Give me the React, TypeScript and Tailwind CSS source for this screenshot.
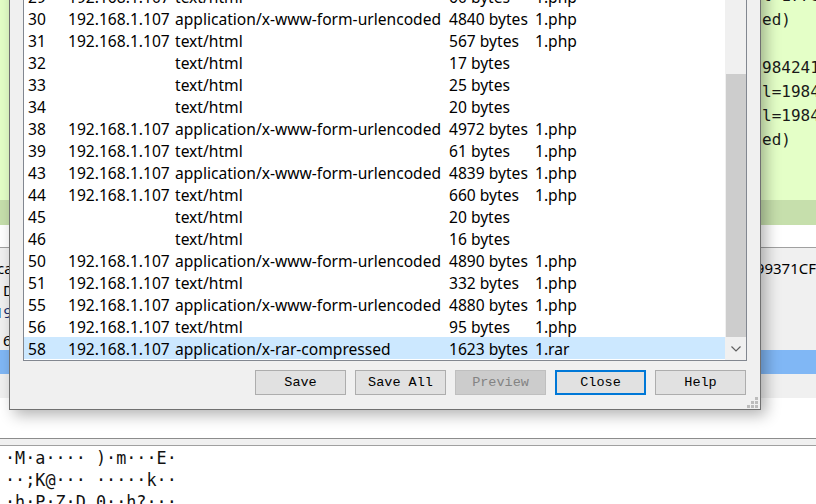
import React from "react";

type Row = { n: string; host: string; type: string; size: string; file: string; sel?: boolean };

const HOST = "192.168.1.107";
const FORM = "application/x-www-form-urlencoded";
const HTML = "text/html";

const rows: Row[] = [
  { n: "29", host: HOST, type: HTML, size: "60 bytes", file: "1.php" },
  { n: "30", host: HOST, type: FORM, size: "4840 bytes", file: "1.php" },
  { n: "31", host: HOST, type: HTML, size: "567 bytes", file: "1.php" },
  { n: "32", host: "", type: HTML, size: "17 bytes", file: "" },
  { n: "33", host: "", type: HTML, size: "25 bytes", file: "" },
  { n: "34", host: "", type: HTML, size: "20 bytes", file: "" },
  { n: "38", host: HOST, type: FORM, size: "4972 bytes", file: "1.php" },
  { n: "39", host: HOST, type: HTML, size: "61 bytes", file: "1.php" },
  { n: "43", host: HOST, type: FORM, size: "4839 bytes", file: "1.php" },
  { n: "44", host: HOST, type: HTML, size: "660 bytes", file: "1.php" },
  { n: "45", host: "", type: HTML, size: "20 bytes", file: "" },
  { n: "46", host: "", type: HTML, size: "16 bytes", file: "" },
  { n: "50", host: HOST, type: FORM, size: "4890 bytes", file: "1.php" },
  { n: "51", host: HOST, type: HTML, size: "332 bytes", file: "1.php" },
  { n: "55", host: HOST, type: FORM, size: "4880 bytes", file: "1.php" },
  { n: "56", host: HOST, type: HTML, size: "95 bytes", file: "1.php" },
  { n: "58", host: HOST, type: "application/x-rar-compressed", size: "1623 bytes", file: "1.rar", sel: true },
];

const greenLines = ["l=1776001", "ed)", "\u00a0", "98424170", "l=19842417", "l=19842417", "ed)"];
const hexLines = [
  "\u00b7M\u00b7a\u00b7\u00b7\u00b7\u00b7 )\u00b7m\u00b7\u00b7\u00b7E\u00b7",
  "\u00b7\u00b7;K@\u00b7\u00b7\u00b7 \u00b7\u00b7\u00b7\u00b7\u00b7k\u00b7\u00b7",
  "\u00b7h\u00b7P\u00b7Z\u00b7D 0\u00b7\u00b7h?\u00b7\u00b7\u00b7",
];

const sans = { fontFamily: '"Noto Sans", "Liberation Sans", sans-serif' };
const mono = { fontFamily: '"DejaVu Sans Mono", "Liberation Mono", monospace' };
const btnFont = { fontFamily: '"Liberation Mono", "DejaVu Sans Mono", monospace' };

function Btn({ label, kind }: { label: string; kind?: "default" | "disabled" }) {
  const cls =
    kind === "default"
      ? "border-2 border-[#0078d7] bg-[#e1e1e1] text-black"
      : kind === "disabled"
      ? "border border-[#bfbfbf] bg-[#cccccc] text-[#838383]"
      : "border border-[#adadad] bg-[#e1e1e1] text-black";
  return (
    <div className={`w-[91px] h-[25px] pt-[2px] flex items-center justify-center text-[13.5px] ${cls}`} style={btnFont}>
      {label}
    </div>
  );
}

export default function App() {
  return (
    <div className="relative w-[816px] h-[504px] overflow-hidden bg-white">
      {/* background main window */}
      <div className="flex flex-col w-full h-full">
        <div className="h-[200px] shrink-0 bg-[#e4ffc7] overflow-hidden">
          <div className="flex flex-col pl-[762px] -mt-[16px] text-[16px] leading-[24px] text-[#1a1a1a] whitespace-nowrap" style={mono}>
            {greenLines.map((l, i) => (
              <div key={i} className="h-[24px]">{l}</div>
            ))}
          </div>
        </div>
        <div className="h-[25px] shrink-0 bg-[#c6dfac]" />
        <div className="h-[22px] shrink-0 bg-white" />
        <div className="h-px shrink-0 bg-[#a0a0a0]" />
        <div className="h-[102px] shrink-0 bg-[#f0f0f0] pt-[9px] text-[15px] leading-[22px] text-black whitespace-nowrap overflow-hidden" style={sans}>
          <div className="flex h-[22px]">
            <span className="w-[770px] -ml-[3px]">ca</span>
            <span>99371CF</span>
          </div>
          <div className="flex h-[22px] pl-[3px]">D</div>
          <div className="flex h-[22px] -ml-[5px] text-[#1b2f6b]">19</div>
          <div className="flex h-[22px] pl-[3px] mt-[6px]">6</div>
        </div>
        <div className="h-[24px] shrink-0 bg-[#80b7f5]" />
        <div className="h-[24px] shrink-0 bg-[#f0f0f0]" />
        <div className="h-[40px] shrink-0 bg-white" />
        <div className="h-px shrink-0 bg-[#8c8c8c]" />
        <div className="h-[6px] shrink-0 bg-[#f0f0f0]" />
        <div className="h-px shrink-0 bg-[#a0a0a0]" />
        <div className="flex-1 min-h-0 overflow-hidden bg-white pt-px pl-[5px] text-[16.8px] leading-[22px] text-[#111] whitespace-pre" style={mono}>
          {hexLines.map((l, i) => (
            <div key={i} className="h-[22px]">{l}</div>
          ))}
        </div>
      </div>

      {/* Export objects dialog */}
      <div className="absolute left-[9px] top-[-40px] w-[752px] h-[450px] border border-[#707070] bg-[#f0f0f0] shadow-[5px_5px_14px_rgba(0,0,0,0.3)] flex flex-col px-[13px]">
        <div className="mt-[23px] h-[377px] shrink-0 border border-[#828790] bg-white flex">
          <div className="w-[701px] flex flex-col text-[15.6px] leading-[24px] text-black whitespace-nowrap overflow-hidden" style={sans}>
            {rows.map((r, i) => (
              <div key={i} className={`flex h-[22px] shrink-0 pl-[4px] ${r.sel ? "bg-[#cce8ff]" : ""}`}>
                <span className="w-[40px] shrink-0">{r.n}</span>
                <span className="w-[107px] shrink-0">{r.host}</span>
                <span className="w-[274px] shrink-0">{r.type}</span>
                <span className="w-[86px] shrink-0">{r.size}</span>
                <span>{r.file}</span>
              </div>
            ))}
          </div>
          <div className="w-[21px] bg-[#f0f0f0] flex flex-col">
            <div className="h-[89px] shrink-0" />
            <div className="h-[263px] shrink-0 ml-px bg-[#cdcdcd]" />
            <div className="flex-1 flex items-center justify-center">
              <svg width="10" height="6" viewBox="0 0 10 6">
                <polyline points="0.5,0.5 5,5 9.5,0.5" fill="none" stroke="#606060" strokeWidth="1.2" />
              </svg>
            </div>
          </div>
        </div>
        <div className="mt-[9px] flex justify-end gap-[9px] mr-px">
          <Btn label="Save" />
          <Btn label="Save All" />
          <Btn label="Preview" kind="disabled" />
          <Btn label="Close" kind="default" />
          <Btn label="Help" />
        </div>
        <div className="absolute right-[2px] bottom-[1px]">
          <svg width="11" height="11" viewBox="0 0 11 11">
            <rect x="8" y="0" width="3" height="3" fill="#bcbcbc" />
            <rect x="4" y="4" width="3" height="3" fill="#bcbcbc" />
            <rect x="8" y="4" width="3" height="3" fill="#bcbcbc" />
            <rect x="0" y="8" width="3" height="3" fill="#bcbcbc" />
            <rect x="4" y="8" width="3" height="3" fill="#bcbcbc" />
            <rect x="8" y="8" width="3" height="3" fill="#bcbcbc" />
          </svg>
        </div>
      </div>
    </div>
  );
}
